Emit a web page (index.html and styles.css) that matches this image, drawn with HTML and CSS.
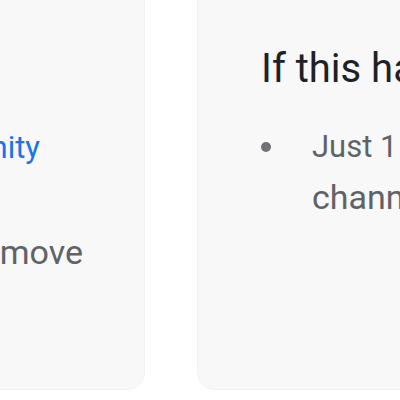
FILE: index.html
```html
<!DOCTYPE html>
<html>
<head>
<meta charset="utf-8">
<link rel="stylesheet" href="styles.css">
</head>
<body>
<div class="page">
  <section class="card card-left">
    <h2 class="card-title">Get help</h2>
    <ul class="tips tips-left">
      <li class="tip"><span class="tip-text">Go to the <a class="link" href="#">Help Community</a></span></li>
      <li class="tip"><span class="tip-text">Ask an admin</span></li>
      <li class="tip"><span class="tip-text tip-big">Ask the creators to remove</span></li>
    </ul>
  </section>
  <section class="card card-right">
    <h2 class="card-title">If this happens to you</h2>
    <ul class="tips">
      <li class="tip"><span class="tip-text">Just 1 person left in this <span class="tip-big">channel</span></span></li>
    </ul>
  </section>
</div>
</body>
</html>
```
FILE: styles.css
```css
html, body {
  margin: 0;
  padding: 0;
  overflow: hidden;
  background: #ffffff;
}
body {
  font-family: Roboto, "Noto Sans", Arial, sans-serif;
  width: 400px;
  height: 400px;
}
.page {
  display: flex;
  gap: 52px;
  margin-top: -20px;
  margin-left: -438px;
  width: 1300px;
}
.card {
  flex: none;
  box-sizing: border-box;
  height: 410px;
  background: #f8f8f8;
  border: 1px solid #f1f1f1;
  border-radius: 18px;
  padding: 64px 62px 0 61px;
}
.card-left {
  width: 583px;
  padding-right: 10px;
}
.card-right { width: 560px; }
.card-title {
  margin: 0 0 0 2px;
  font-size: 40px;
  line-height: 48px;
  font-weight: 400;
  color: #202124;
  white-space: nowrap;
}
.tips {
  list-style: none;
  margin: 28px 0 0;
  padding: 0;
}
.tip {
  display: flex;
  font-size: 31px;
  line-height: 51px;
  color: #5f6368;
}
.tips-left {
  margin-top: 29px;
}
.tips-left .tip {
  line-height: 52px;
}
.tip::before {
  content: "";
  flex: none;
  width: 10px;
  height: 10px;
  border-radius: 50%;
  background: #6f7276;
  margin: 21px 41px 0 2px;
}
.tip-big {
  font-size: 34px;
}
.link {
  color: #1a73e8;
  text-decoration: none;
}
```
